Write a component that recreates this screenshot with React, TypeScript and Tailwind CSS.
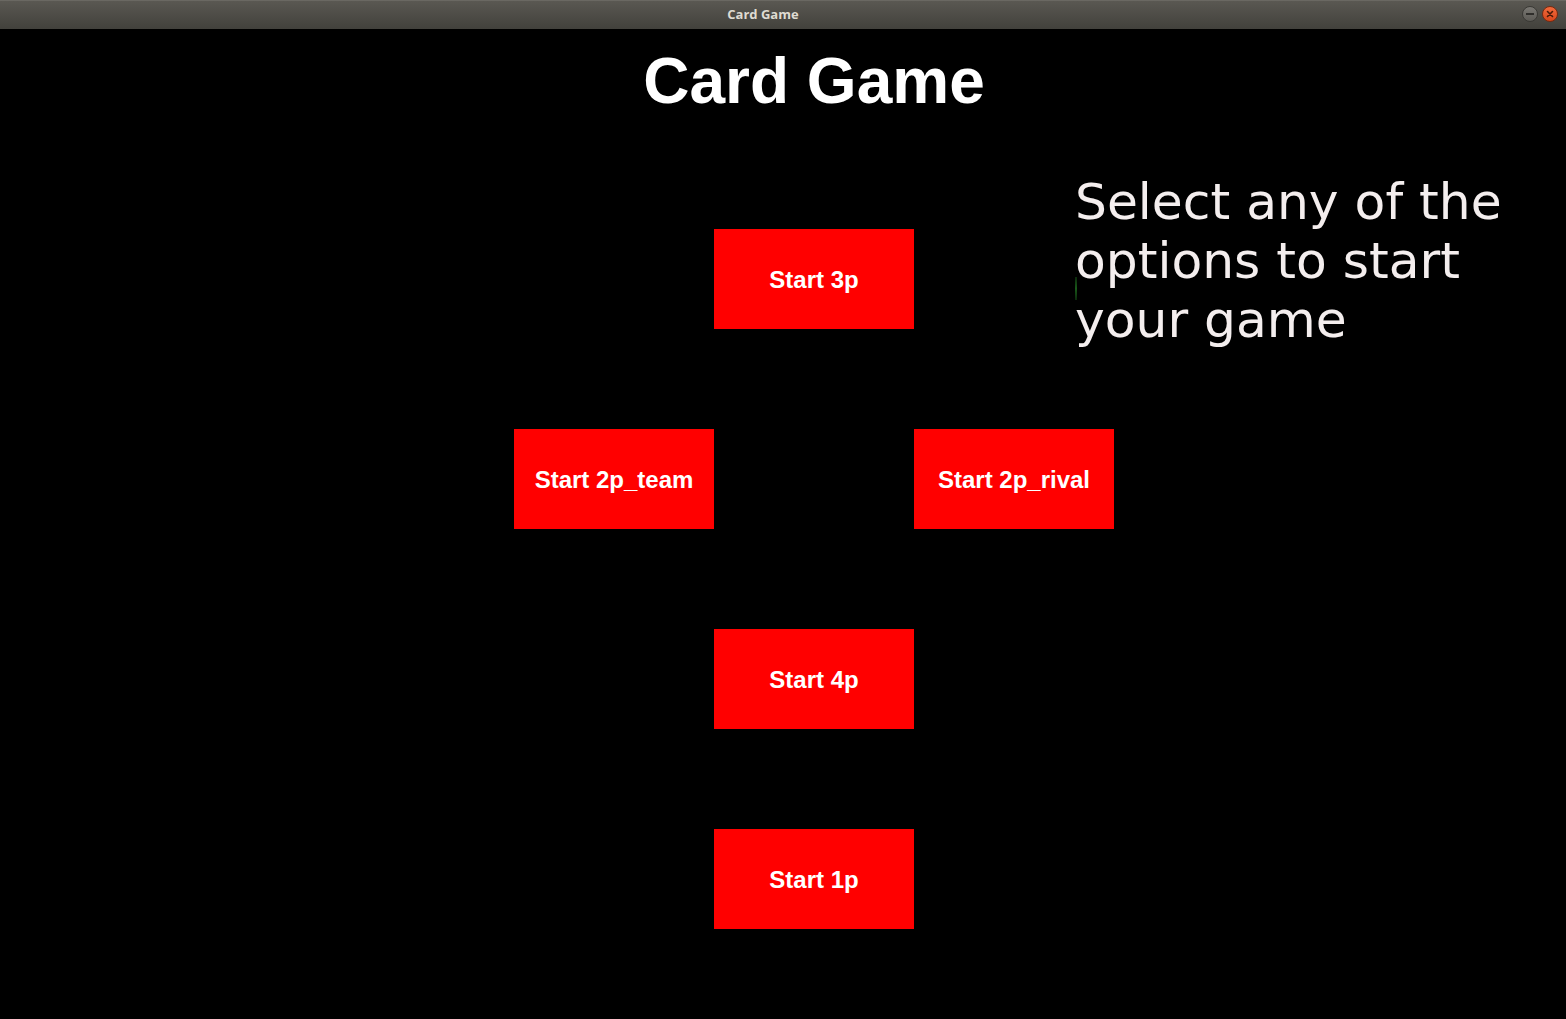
import React from "react";

function TitleBar() {
  return (
    <div className="relative flex h-[29px] items-center justify-center bg-gradient-to-b from-[#5a5852] to-[#42413c] border-t border-[#6a6862] pr-[40px]">
      <span
        className="text-[13px] font-bold text-[#dfdbd2]"
        style={{ fontFamily: '"Open Sans", "DejaVu Sans", sans-serif' }}
      >
        Card Game
      </span>
      <div className="absolute right-[8px] top-[5px] flex items-center gap-[4px]">
        <div className="flex h-[16px] w-[16px] items-center justify-center rounded-full bg-gradient-to-b from-[#7a7873] to-[#5c5a55] border border-[#3a3935]">
          <div className="h-[2px] w-[8px] bg-[#2f2e2b]" />
        </div>
        <div className="flex h-[16px] w-[16px] items-center justify-center rounded-full bg-gradient-to-b from-[#f26a3c] to-[#d9461a] border border-[#7a2a10]">
          <svg width="8" height="8" viewBox="0 0 8 8">
            <path d="M1.5 1.5 L6.5 6.5 M6.5 1.5 L1.5 6.5" stroke="#4a1a08" strokeWidth="1.6" strokeLinecap="round" />
          </svg>
        </div>
      </div>
    </div>
  );
}

function StartButton({ label, className }: { label: string; className: string }) {
  return (
    <button
      className={
        "flex h-[100px] w-[200px] items-center justify-center bg-[#ff0000] pt-[2px] text-[24px] font-bold text-white " +
        className
      }
      style={{ fontFamily: '"Liberation Sans", Arial, sans-serif' }}
    >
      {label}
    </button>
  );
}

export default function App() {
  return (
    <div className="h-[1019px] w-full overflow-hidden bg-black">
      <TitleBar />
      <div className="grid grid-cols-[514px_200px_200px_162px_38px_1fr] grid-rows-[142px_58px_100px_100px_100px_100px_100px_100px_100px]">
        <h1
          className="col-start-2 col-end-6 row-start-1 pt-[15px] text-center text-[64px] font-bold text-white"
          style={{ fontFamily: '"Liberation Sans", Arial, sans-serif', lineHeight: "normal" }}
        >
          Card Game
        </h1>
        <div className="relative col-start-5 col-end-7 row-start-2 row-end-5 pt-[1px]">
          <p
            className="ml-[-1px] w-[460px] text-[50.3px] leading-[59px] text-[#f4eeee]"
            style={{ fontFamily: '"DejaVu Sans", sans-serif' }}
          >
            Select any of the options to start your game
          </p>
          <div className="absolute left-[-1px] top-[106px] h-[23px] w-[2px] bg-gradient-to-b from-[#0b2a0b] via-[#1a5a1a] to-[#0b2a0b]" />
        </div>
        <StartButton label="Start 3p" className="col-start-3 row-start-3" />
        <StartButton label="Start 2p_team" className="col-start-2 row-start-5" />
        <StartButton label="Start 2p_rival" className="col-start-4 col-end-6 row-start-5" />
        <StartButton label="Start 4p" className="col-start-3 row-start-7" />
        <StartButton label="Start 1p" className="col-start-3 row-start-9" />
      </div>
    </div>
  );
}
